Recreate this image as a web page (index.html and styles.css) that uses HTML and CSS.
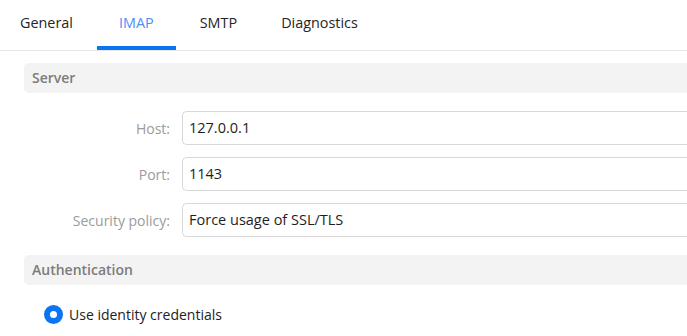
FILE: index.html
```html
<!DOCTYPE html>
<html>
<head>
<meta charset="utf-8">
<link rel="stylesheet" href="styles.css">
</head>
<body>
<div class="page">
  <nav class="tabs">
    <div class="tab">General</div>
    <div class="tab active">IMAP</div>
    <div class="tab">SMTP</div>
    <div class="tab">Diagnostics</div>
  </nav>
  <div class="content">
    <div class="section-head">Server</div>
    <div class="form">
      <div class="row">
        <label class="label">Host:</label>
        <div class="input">127.0.0.1</div>
      </div>
      <div class="row">
        <label class="label">Port:</label>
        <div class="input">1143</div>
      </div>
      <div class="row">
        <label class="label">Security policy:</label>
        <div class="input">Force usage of SSL/TLS</div>
      </div>
    </div>
    <div class="section-head">Authentication</div>
    <div class="radio-row">
      <span class="radio"></span>
      <span class="radio-label">Use identity credentials</span>
    </div>
  </div>
</div>
</body>
</html>
```
FILE: styles.css
```css
html, body {
  margin: 0;
  padding: 0;
  background: #ffffff;
  overflow: hidden;
}
body {
  font-family: "Open Sans", "Noto Sans", "Liberation Sans", sans-serif;
  font-size: 14px;
  color: #222222;
}
.page {
  width: 760px;
}
.tabs {
  display: flex;
  height: 50px;
  border-bottom: 1px solid #e8e8e8;
  gap: 4px;
}
.tab {
  box-sizing: border-box;
  height: 50px;
  line-height: 46px;
  padding: 0 20px;
  border-bottom: 4px solid transparent;
  color: #252525;
  font-size: 14.4px;
}
.tab.active {
  color: #4f8ef9;
  border-bottom-color: #0a74f2;
  padding: 0 22px;
}
.content {
  padding: 12px 0 0 24px;
}
.section-head {
  height: 30px;
  line-height: 29px;
  background: #f3f3f3;
  border-radius: 5px 0 0 5px;
  padding-left: 8px;
  font-weight: 600;
  color: #7c7c7c;
}
.form {
  display: flex;
  flex-direction: column;
  gap: 12px;
  padding: 18px 0;
}
.row {
  display: flex;
  align-items: center;
  gap: 12px;
}
.label {
  width: 146px;
  text-align: right;
  color: #9b9b9b;
}
.input {
  flex: 1;
  box-sizing: border-box;
  height: 34px;
  line-height: 32px;
  border: 1px solid #d8d8d8;
  border-right: none;
  border-radius: 5px 0 0 5px;
  padding-left: 6px;
  color: #1e1e1e;
  font-size: 14.5px;
}
.radio-row {
  display: flex;
  align-items: center;
  gap: 6px;
  padding: 20px 0 0 20px;
}
.radio {
  box-sizing: border-box;
  width: 19px;
  height: 19px;
  border-radius: 50%;
  border: 6px solid #0a74f2;
  background: #ffffff;
}
.radio-label {
  color: #222222;
}
```
